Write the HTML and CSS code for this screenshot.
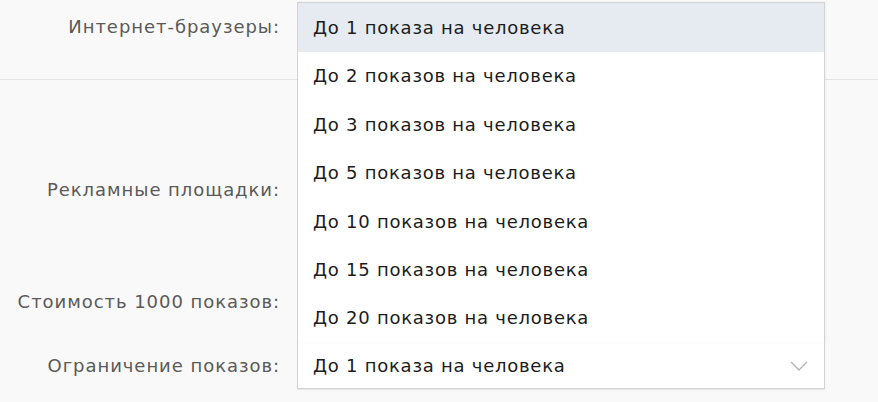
FILE: index.html
```html
<!DOCTYPE html>
<html lang="ru">
<head>
<meta charset="utf-8">
<title>Ограничение показов</title>
<link rel="stylesheet" href="styles.css">
</head>
<body>
<div class="form">
  <div class="section section-first">
    <div class="row row-browsers">
      <div class="label">Интернет-браузеры:</div>
      <div class="field"></div>
    </div>
  </div>
  <div class="section section-second">
    <div class="row row-platforms">
      <div class="label">Рекламные площадки:</div>
      <div class="field"></div>
    </div>
    <div class="row row-cost">
      <div class="label">Стоимость 1000 показов:</div>
      <div class="field"></div>
    </div>
    <div class="row row-limit">
      <div class="label">Ограничение показов:</div>
      <div class="field">
        <div class="select">
          <span class="select-value">До 1 показа на человека</span>
          <svg class="chevron" width="18" height="10" viewBox="0 0 18 10" aria-hidden="true">
            <path d="M1 1 L9 9 L17 1" fill="none" stroke="#b3b3b3" stroke-width="1.4"/>
          </svg>
          <ul class="dropdown">
            <li class="option option-active">До 1 показа на человека</li>
            <li class="option">До 2 показов на человека</li>
            <li class="option">До 3 показов на человека</li>
            <li class="option">До 5 показов на человека</li>
            <li class="option">До 10 показов на человека</li>
            <li class="option">До 15 показов на человека</li>
            <li class="option">До 20 показов на человека</li>
          </ul>
        </div>
      </div>
    </div>
  </div>
</div>
</body>
</html>
```

FILE: styles.css
```css
html, body {
  margin: 0;
  padding: 0;
}
body {
  background: #f9f9f9;
  font-family: "DejaVu Sans", Verdana, sans-serif;
  font-size: 18px;
  color: #1c1c1c;
  width: 878px;
  height: 402px;
  overflow: hidden;
}
.form {
  display: flex;
  flex-direction: column;
}
.section-first {
  height: 80px;
  box-sizing: border-box;
  border-bottom: 1px solid #e3e3e3;
  padding-top: 2px;
}
.section-second {
  display: flex;
  flex-direction: column;
  padding-top: 85px;
}
.row {
  display: grid;
  grid-template-columns: 297px 528px;
  height: 48px;
  align-items: center;
}
.row-browsers {
  height: 49px;
}
.row-cost {
  margin-top: 64px;
}
.row-limit {
  margin-top: 16px;
}
.label {
  text-align: right;
  padding-right: 17px;
  color: #5a5a5a;
  letter-spacing: 0.95px;
  white-space: nowrap;
}
.field {
  height: 100%;
}
.select {
  position: relative;
  box-sizing: border-box;
  height: 48px;
  background: #fff;
  border: 1px solid #d3d3d3;
  box-shadow: 0 1px 1px rgba(0, 0, 0, 0.06);
  display: flex;
  align-items: center;
  justify-content: space-between;
  padding: 0 16px 0 15px;
}
.select-value {
  white-space: nowrap;
  letter-spacing: 0.75px;
}
.chevron {
  display: block;
  margin-top: 2px;
}
.dropdown {
  position: absolute;
  left: -1px;
  right: -1px;
  bottom: 100%;
  margin: 0;
  padding: 0;
  list-style: none;
  background: #fff;
  border: 1px solid #d3d3d3;
  border-bottom: none;
  box-shadow: 1px 0 2px rgba(0, 0, 0, 0.05);
}
.option {
  height: 48.4px;
  display: flex;
  align-items: center;
  padding-left: 15px;
  letter-spacing: 0.75px;
  white-space: nowrap;
}
.option-active {
  background: #e5ebf1;
}
```
